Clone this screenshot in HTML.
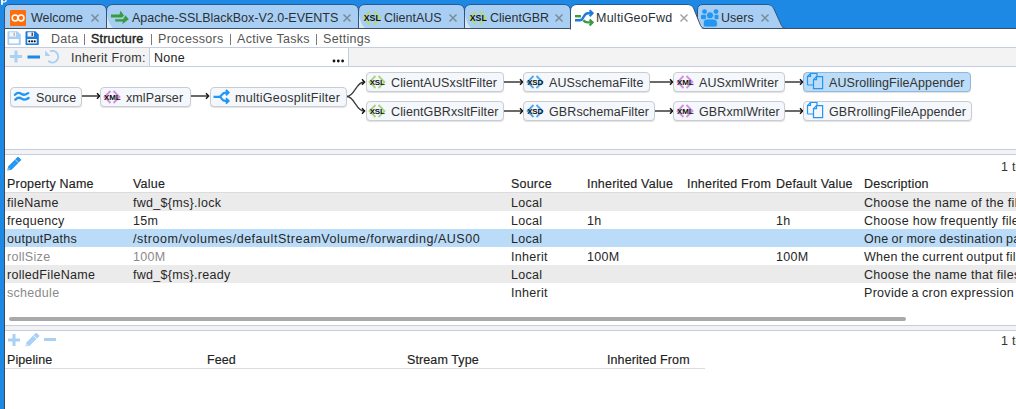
<!DOCTYPE html>
<html><head><meta charset="utf-8">
<style>
*{margin:0;padding:0;box-sizing:border-box}
html,body{width:1016px;height:409px;overflow:hidden;background:#fff}
body{position:relative;font-family:"Liberation Sans",sans-serif;color:#222}
.a{position:absolute;white-space:pre;line-height:1}
.t13{font-size:12.5px}
.node{position:absolute;height:20px;border:1px solid #c9cdd2;border-radius:4px;background:#f4f7fb;box-shadow:0 1px 1px rgba(0,0,0,.12)}
.node.sel{background:#bcdcf7;border-color:#8fb8dc}
.nt{position:absolute;top:4px;font-size:12.5px;line-height:1;color:#333;white-space:pre;letter-spacing:.1px}
.hdr{font-size:12.5px;color:#222;letter-spacing:.2px;-webkit-text-stroke:.15px #222}
.cell{font-size:12.5px;color:#262626;letter-spacing:.3px}
.grey{color:#8a8a8a}
.tb{top:33px;font-size:12.5px;color:#555;letter-spacing:.3px}
.row{position:absolute;left:5px;width:1011px;height:18px}
</style></head><body>

<!-- top bar & tabs -->
<svg class="a" style="left:0;top:0" width="1016" height="409" viewBox="0 0 1016 409">
  <rect x="0" y="0" width="1016" height="29" fill="#1e88e5"/>
  <rect x="0" y="0" width="4" height="409" fill="#1e88e5"/>
  <rect x="4" y="29" width="1" height="380" fill="#3b4656"/>
  <!-- white p descender -->
  <path d="M1,0 H2.9 V4.8 H1z M2.9,0 H6.9 Q6.8,2.5 4.4,2.5 H2.9 V1.2 H4.4 Q5.4,1.2 5.5,0z" fill="#fff"/>
  <defs><linearGradient id="tg" gradientUnits="userSpaceOnUse" x1="0" y1="4" x2="0" y2="28"><stop offset="0" stop-color="#1f5c98"/><stop offset="0.35" stop-color="#2d5378"/><stop offset="1" stop-color="#445266"/></linearGradient></defs>
  <!-- Users tab -->
  <path d="M697.5,28.5 V10 Q697.5,4.5 703,4.5 H768 Q772,4.5 773.5,8 L781.5,25.5 Q782.5,28.5 786,28.5" fill="#a8cff3" stroke="url(#tg)" stroke-width="1"/>
  <!-- unselected tabs -->
  <path d="M4.5,28.5 V10 Q4.5,4.5 10,4.5 H100 Q106.5,4.5 106.5,11 V28.5z" fill="#a8cff3" stroke="url(#tg)"/>
  <path d="M106.5,28.5 V11 Q106.5,4.5 113,4.5 H352 Q358.5,4.5 358.5,11 V28.5z" fill="#a8cff3" stroke="url(#tg)"/>
  <path d="M358.5,28.5 V11 Q358.5,4.5 365,4.5 H458 Q464.5,4.5 464.5,11 V28.5z" fill="#a8cff3" stroke="url(#tg)"/>
  <path d="M464.5,28.5 V11 Q464.5,4.5 471,4.5 H564 Q570.5,4.5 570.5,11 V28.5z" fill="#a8cff3" stroke="url(#tg)"/>
  <!-- whitish triangles -->
  <path d="M107,15 Q109,25 113,28 H107z" fill="#d4e8fa"/>
  <path d="M359,15 Q361,25 365,28 H359z" fill="#d4e8fa"/>
  <path d="M465,15 Q467,25 471,28 H465z" fill="#d4e8fa"/>
  <!-- bottom dark line -->
  <rect x="4" y="28" width="567" height="1" fill="#3f5064"/>
  <rect x="702" y="28" width="314" height="1" fill="#3f5064"/>
  <!-- selected tab -->
  <path d="M570.5,29.5 V11 Q570.5,4.5 577,4.5 H688 Q692,4.5 693.5,8 L700.5,25.5 Q701.5,28.5 705,28.5" fill="#fff" stroke="url(#tg)"/>
  <rect x="571" y="27" width="130" height="3" fill="#fff"/>
</svg>

<!-- tab icons -->
<svg class="a" style="left:10px;top:10px" width="16" height="16" viewBox="0 0 16 16">
  <rect width="16" height="16" rx="1" fill="#ff6d0a"/>
  <circle cx="5.1" cy="8" r="2.9" fill="none" stroke="#fff" stroke-width="1.5"/>
  <circle cx="11.1" cy="8" r="2.9" fill="none" stroke="#fff" stroke-width="1.5"/>
</svg>
<div class="a t13" style="left:31px;top:12px;color:#2a2f36">Welcome</div>


<svg class="a" style="left:110px;top:10px" width="20" height="16" viewBox="0 0 20 16">
  <path d="M1,4.4 H9.5 L10.5,0.7 L14,5.5 L12,7.6 H1z" fill="#3a9a3e"/>
  <path d="M5,9 H13 L15.4,5.1 L19,9.3 L12.2,14.6 L12.5,11.8 H5z" fill="#3a9a3e" stroke="#9fcde0" stroke-width="0.5"/>
</svg>
<div class="a t13" style="left:132px;top:12px;color:#2a2f36">Apache-SSLBlackBox-V2.0-EVENTS</div>


<svg class="a" style="left:363px;top:10px" width="18" height="16" viewBox="0 0 18 16">
  <path d="M7,1.5 L1,8 L7,14.5 M11,1.5 L17,8 L11,14.5" fill="none" stroke="#b5d879" stroke-width="2"/>
  <text x="9.3" y="11" text-anchor="middle" font-family="Liberation Sans" font-weight="bold" font-size="8.8" fill="#111" letter-spacing="0">XSL</text>
</svg>
<div class="a t13" style="left:384px;top:12px;color:#2a2f36">ClientAUS</div>


<svg class="a" style="left:469px;top:10px" width="18" height="16" viewBox="0 0 18 16">
  <path d="M7,1.5 L1,8 L7,14.5 M11,1.5 L17,8 L11,14.5" fill="none" stroke="#b5d879" stroke-width="2"/>
  <text x="9.3" y="11" text-anchor="middle" font-family="Liberation Sans" font-weight="bold" font-size="8.8" fill="#111" letter-spacing="0">XSL</text>
</svg>
<div class="a t13" style="left:490px;top:12px;color:#2a2f36">ClientGBR</div>


<svg class="a" style="left:574px;top:9px" width="20" height="18" viewBox="0 0 20 18">
  <g fill="none" stroke-width="2.4">
  <path d="M1,7.2 H7" stroke="#3a9a3e"/>
  <path d="M9.3,11.3 Q11,13.4 14,13.4 H18" stroke="#3a9a3e"/>
  <path d="M15.6,10.4 L18.6,13.4 L15.6,16.4" stroke="#3a9a3e" stroke-width="2.1"/>
  <path d="M1,11.2 H6 Q8,11.2 9.5,8 Q11.5,4.2 14,4.2 H18" stroke="#1e7ddb"/>
  <path d="M15.6,1.2 L18.6,4.2 L15.6,7.2" stroke="#1e7ddb" stroke-width="2.1"/>
  </g>
</svg>
<div class="a t13" style="left:596px;top:12px;color:#2a2f36;letter-spacing:.25px">MultiGeoFwd</div>


<svg class="a" style="left:700px;top:8px" width="20" height="20" viewBox="0 0 20 20">
  <g fill="#2196f3">
  <circle cx="4.5" cy="3.6" r="2.4"/><circle cx="16" cy="3.6" r="2.4"/>
  <rect x="1" y="6.8" width="5" height="4.4" rx="1"/><rect x="14.5" y="6.8" width="4" height="4.4" rx="1"/>
  <circle cx="10" cy="7.4" r="3.6" stroke="#a8cff3" stroke-width="0.8"/>
  <path d="M3.3,15 Q3.3,11 7.5,11 H12.5 Q17.4,11 17.4,15 V17 Q17.4,19 15,19 H5.5 Q3.3,19 3.3,17z" stroke="#a8cff3" stroke-width="0.8"/>
  </g>
</svg>
<div class="a t13" style="left:721px;top:12px;color:#2a2f36">Users</div>


<svg class="a" style="left:0;top:0" width="1016" height="30" viewBox="0 0 1016 30"><g stroke-width="1.5"><path d="M91.5,14.5 L98.5,21.5 M98.5,14.5 L91.5,21.5" stroke="#7d8b99"/><path d="M343.5,14.5 L350.5,21.5 M350.5,14.5 L343.5,21.5" stroke="#7d8b99"/><path d="M449.5,14.5 L456.5,21.5 M456.5,14.5 L449.5,21.5" stroke="#7d8b99"/><path d="M555.5,14.5 L562.5,21.5 M562.5,14.5 L555.5,21.5" stroke="#7d8b99"/><path d="M680.5,14.5 L687.5,21.5 M687.5,14.5 L680.5,21.5" stroke="#a0a4a8"/><path d="M761.5,14.5 L768.5,21.5 M768.5,14.5 L761.5,21.5" stroke="#7d8b99"/></g></svg>
<!-- toolbar row -->
<svg class="a" style="left:7px;top:31px" width="34" height="15" viewBox="0 0 34 15">
  <path d="M0.5,1 Q0.5,0.3 1.2,0.3 H10.5 L13.8,3.6 V13.3 Q13.8,14 13.1,14 H1.2 Q0.5,14 0.5,13.3z" fill="#a8cff3"/>
  <rect x="2.5" y="1.2" width="6.5" height="4.4" fill="#f4f6f8"/><rect x="6.5" y="1.6" width="1.5" height="3.4" fill="#b9b9b9"/>
  <rect x="2.2" y="8" width="9.5" height="4.4" fill="#fff"/>
  <path d="M18.5,1 Q18.5,0.3 19.2,0.3 H28.5 L31.8,3.6 V13.3 Q31.8,14 31.1,14 H19.2 Q18.5,14 18.5,13.3z" fill="#1e7ddb"/>
  <rect x="20.5" y="1.2" width="6.5" height="4.4" fill="#f4f6f8"/><rect x="24.5" y="1.6" width="1.5" height="3.4" fill="#555"/>
  <rect x="20.2" y="8" width="9.5" height="4.4" fill="#fff"/>
  <circle cx="22.3" cy="10.3" r="1.1" fill="#111"/><circle cx="25" cy="10.3" r="1.1" fill="#111"/><circle cx="27.7" cy="10.3" r="1.1" fill="#111"/>
</svg>
<div class="a tb" style="left:51px">Data</div><div class="a" style="left:84px;top:34px;width:1px;height:11px;background:#7a7a7a"></div><div class="a tb" style="left:91px;color:#222;letter-spacing:.2px;-webkit-text-stroke:.4px #222">Structure</div><div class="a" style="left:151px;top:34px;width:1px;height:11px;background:#7a7a7a"></div><div class="a tb" style="left:158px">Processors</div><div class="a" style="left:230px;top:34px;width:1px;height:11px;background:#7a7a7a"></div><div class="a tb" style="left:237px">Active Tasks</div><div class="a" style="left:316px;top:34px;width:1px;height:11px;background:#7a7a7a"></div><div class="a tb" style="left:323px">Settings</div>

<!-- inherit row -->
<div class="a" style="left:5px;top:47px;width:1011px;height:20px;background:#f3f3f3;border-top:1px solid #c5cde3;border-bottom:1px solid #c5cde3"></div>
<svg class="a" style="left:9px;top:50px" width="52" height="14" viewBox="0 0 52 14">
  <path d="M1,6.5 H13 M7,0.5 V12.5" stroke="#a8d1f5" stroke-width="3"/>
  <path d="M18.5,7 H31" stroke="#1e88e5" stroke-width="3"/>
  <path d="M40.95,1.44 A5.8,5.8 0 1 1 39.3,10.8" fill="none" stroke="#a8d1f5" stroke-width="2"/>
  <path d="M36.1,0.4 V5.9 H41.4z" fill="#a8d1f5"/>
</svg>
<div class="a" style="left:71px;top:52px;font-size:12.5px;color:#333;letter-spacing:.3px">Inherit From:</div>
<div class="a" style="left:149px;top:47px;width:200px;height:20px;background:#fff;border:1px solid #c5cde3"></div>
<div class="a" style="left:154px;top:52px;font-size:12.5px;color:#222;letter-spacing:.3px">None</div>
<svg class="a" style="left:332px;top:59px" width="14" height="4" viewBox="0 0 14 4"><circle cx="2" cy="2" r="1.4" fill="#111"/><circle cx="6.3" cy="2" r="1.4" fill="#111"/><circle cx="10.6" cy="2" r="1.4" fill="#111"/></svg>

<!-- pipeline diagram -->
<svg class="a" style="left:0;top:66px" width="1016" height="84" viewBox="0 66 1016 84">
  <g stroke="#3a3a3a" stroke-width="1.3" fill="none">
    <path d="M82,96 H99 M190,96 H208 M504,82 H522 M504,111 H522 M650,82 H672 M654.5,111 H672 M784.5,82 H802 M784.5,111 H802" />
    <path d="M347,96.5 C355,96 356,82 364,82"/>
    <path d="M347,96.5 C355,97 356,111 364,111"/>
  </g>
  <g stroke="#111" stroke-width="1.4" fill="none">
    <path d="M97,93.2 L99.6,96 L97,98.8 M206,93.2 L208.6,96 L206,98.8"/>
    <path d="M362,79.2 L364.6,82 L362,84.8 M362,108.2 L364.6,111 L362,113.8"/>
    <path d="M520,79.2 L522.6,82 L520,84.8 M520,108.2 L522.6,111 L520,113.8"/>
    <path d="M670,79.2 L672.6,82 L670,84.8 M670,108.2 L672.6,111 L670,113.8"/>
    <path d="M800,79.2 L802.6,82 L800,84.8 M800,108.2 L802.6,111 L800,113.8"/>
  </g>
</svg>

<div class="node" style="left:10px;top:87px;width:72px"></div>
<svg class="a" style="left:13px;top:91px" width="18" height="12" viewBox="0 0 18 12"><path d="M2,3.8 Q5,0.6 8.2,2.8 Q11.5,5 15.2,2.2 M2.4,8.6 Q5.4,5.4 8.6,7.6 Q11.9,9.8 15.6,7" fill="none" stroke="#2196f3" stroke-width="2.3" stroke-linecap="round"/></svg>
<div class="a nt" style="left:36px;top:92px">Source</div>

<div class="node" style="left:100px;top:87px;width:91px"></div>
<svg class="a" style="left:103px;top:90px" width="18" height="14" viewBox="0 0 18 14"><path d="M7.5,1 L1.5,7 L7.5,13 M10.5,1 L16.5,7 L10.5,13" fill="none" stroke="#d98be0" stroke-width="1.8"/><text x="9.2" y="9.7" text-anchor="middle" font-family="Liberation Sans" font-weight="bold" font-size="8" fill="#111" letter-spacing="-0.15">XML</text></svg>
<div class="a nt" style="left:126px;top:92px">xmlParser</div>

<div class="node" style="left:210px;top:87px;width:137px"></div>
<svg class="a" style="left:212px;top:89px" width="20" height="16" viewBox="0 0 20 16"><g fill="none" stroke="#2196f3" stroke-width="2.2"><path d="M1.5,7.8 H7 Q8.8,7.8 9.8,5.8 Q11.2,3.6 13.5,3.6 H16.2 M7,7.8 Q8.8,7.8 9.8,9.8 Q11.2,11.9 13.5,11.9 H16.2"/><path d="M13.9,0.9 L16.6,3.6 L13.9,6.3 M13.9,9.2 L16.6,11.9 L13.9,14.6" stroke-width="2"/></g></svg>
<div class="a nt" style="left:235px;top:92px;letter-spacing:.27px">multiGeosplitFilter</div>

<div class="node" style="left:366px;top:72px;width:138px"></div>
<div class="node" style="left:366px;top:101px;width:138px"></div>
<svg class="a" style="left:368px;top:75px" width="18" height="14" viewBox="0 0 18 14"><path d="M7.5,1 L1.5,7 L7.5,13 M10.5,1 L16.5,7 L10.5,13" fill="none" stroke="#a8d67c" stroke-width="1.8"/><text x="9.2" y="9.7" text-anchor="middle" font-family="Liberation Sans" font-weight="bold" font-size="8" fill="#111" letter-spacing="-0.15">XSL</text></svg>
<svg class="a" style="left:368px;top:104px" width="18" height="14" viewBox="0 0 18 14"><path d="M7.5,1 L1.5,7 L7.5,13 M10.5,1 L16.5,7 L10.5,13" fill="none" stroke="#a8d67c" stroke-width="1.8"/><text x="9.2" y="9.7" text-anchor="middle" font-family="Liberation Sans" font-weight="bold" font-size="8" fill="#111" letter-spacing="-0.15">XSL</text></svg>
<div class="a nt" style="left:391px;top:77px">ClientAUSxsltFilter</div>
<div class="a nt" style="left:391px;top:106px">ClientGBRxsltFilter</div>

<div class="node" style="left:523px;top:72px;width:127px"></div>
<div class="node" style="left:523px;top:101px;width:132px"></div>
<svg class="a" style="left:526px;top:75px" width="18" height="14" viewBox="0 0 18 14"><path d="M7.5,1 L1.5,7 L7.5,13 M10.5,1 L16.5,7 L10.5,13" fill="none" stroke="#4aa8f2" stroke-width="1.8"/><text x="9.2" y="9.7" text-anchor="middle" font-family="Liberation Sans" font-weight="bold" font-size="8" fill="#111" letter-spacing="-0.15">XSD</text></svg>
<svg class="a" style="left:526px;top:104px" width="18" height="14" viewBox="0 0 18 14"><path d="M7.5,1 L1.5,7 L7.5,13 M10.5,1 L16.5,7 L10.5,13" fill="none" stroke="#4aa8f2" stroke-width="1.8"/><text x="9.2" y="9.7" text-anchor="middle" font-family="Liberation Sans" font-weight="bold" font-size="8" fill="#111" letter-spacing="-0.15">XSD</text></svg>
<div class="a nt" style="left:549px;top:77px">AUSschemaFilte</div>
<div class="a nt" style="left:549px;top:106px">GBRschemaFilter</div>

<div class="node" style="left:673px;top:72px;width:112px"></div>
<div class="node" style="left:673px;top:101px;width:112px"></div>
<svg class="a" style="left:676px;top:75px" width="18" height="14" viewBox="0 0 18 14"><path d="M7.5,1 L1.5,7 L7.5,13 M10.5,1 L16.5,7 L10.5,13" fill="none" stroke="#d98be0" stroke-width="1.8"/><text x="9.2" y="9.7" text-anchor="middle" font-family="Liberation Sans" font-weight="bold" font-size="8" fill="#111" letter-spacing="-0.15">XML</text></svg>
<svg class="a" style="left:676px;top:104px" width="18" height="14" viewBox="0 0 18 14"><path d="M7.5,1 L1.5,7 L7.5,13 M10.5,1 L16.5,7 L10.5,13" fill="none" stroke="#d98be0" stroke-width="1.8"/><text x="9.2" y="9.7" text-anchor="middle" font-family="Liberation Sans" font-weight="bold" font-size="8" fill="#111" letter-spacing="-0.15">XML</text></svg>
<div class="a nt" style="left:699px;top:77px">AUSxmlWriter</div>
<div class="a nt" style="left:699px;top:106px">GBRxmlWriter</div>

<div class="node sel" style="left:803px;top:72px;width:168px"></div>
<div class="node" style="left:803px;top:101px;width:169px"></div>
<svg class="a" style="left:806px;top:72px" width="18" height="18" viewBox="0 0 18 18"><g fill="none" stroke="#2196f3" stroke-width="1.2"><path d="M1.5,13 V4.5 L4.5,1.5 H11 V4.5 M1.5,13 H7"/><path d="M7.5,16.6 V7.7 L10.5,4.7 H16.6 V16.6z"/><path d="M4.5,1.5 V4.5 H1.5 M10.5,4.7 V7.7 H7.5"/></g></svg>
<svg class="a" style="left:806px;top:101px" width="18" height="18" viewBox="0 0 18 18"><g fill="none" stroke="#2196f3" stroke-width="1.2"><path d="M1.5,13 V4.5 L4.5,1.5 H11 V4.5 M1.5,13 H7"/><path d="M7.5,16.6 V7.7 L10.5,4.7 H16.6 V16.6z"/><path d="M4.5,1.5 V4.5 H1.5 M10.5,4.7 V7.7 H7.5"/></g></svg>
<div class="a nt" style="left:829px;top:77px">AUSrollingFileAppender</div>
<div class="a nt" style="left:829px;top:106px">GBRrollingFileAppender</div>

<!-- splitter 1 -->
<div class="a" style="left:5px;top:149px;width:1011px;height:6px;background:#f2f2f2;border-top:1px solid #c5cde3;border-bottom:1px solid #c5cde3"></div>

<!-- properties toolbar -->
<svg class="a" style="left:7px;top:157px" width="15" height="15" viewBox="0 0 15 15"><g transform="translate(6.7,7.2) rotate(-45)"><path d="M-9,0 L-5.5,-2.4 H8 Q8.5,-2.4 8.5,-1.9 V1.9 Q8.5,2.4 8,2.4 H-5.5z" fill="#2196f3"/><path d="M4.4,-2.4 V2.4" stroke="#d6eafc" stroke-width=".8"/><path d="M-5,0 H3.5" stroke="#7fc0f7" stroke-width=".5" stroke-dasharray="1 1"/><path d="M-8,0 L-6,-1.2 V1.2z" fill="#8cc8f8"/></g></svg>
<div class="a" style="left:1001px;top:161px;font-size:12.5px;color:#333">1</div><div class="a" style="left:1012px;top:161px;font-size:12.5px;color:#333">to</div>

<!-- table header -->
<div class="a hdr" style="left:7px;top:178px">Property Name</div>
<div class="a hdr" style="left:133px;top:178px">Value</div>
<div class="a hdr" style="left:511px;top:178px">Source</div>
<div class="a hdr" style="left:587px;top:178px">Inherited Value</div>
<div class="a hdr" style="left:687px;top:178px">Inherited From</div>
<div class="a hdr" style="left:776px;top:178px">Default Value</div>
<div class="a hdr" style="left:864px;top:178px">Description</div>
<div class="a" style="left:5px;top:192px;width:1011px;height:1px;background:#dcdcdc"></div>

<div class="row" style="top:193px;background:#ebebeb"></div>
<div class="row" style="top:229px;background:#bbdcf8"></div>
<div class="row" style="top:265px;background:#ebebeb"></div>

<div class="a cell" style="left:7px;top:197px">fileName</div>
<div class="a cell" style="left:133px;top:197px">fwd_${ms}.lock</div>
<div class="a cell" style="left:511px;top:197px">Local</div>
<div class="a cell" style="left:864px;top:197px">Choose the name of the file</div>

<div class="a cell" style="left:7px;top:215px">frequency</div>
<div class="a cell" style="left:133px;top:215px">15m</div>
<div class="a cell" style="left:511px;top:215px">Local</div>
<div class="a cell" style="left:587px;top:215px">1h</div>
<div class="a cell" style="left:776px;top:215px">1h</div>
<div class="a cell" style="left:864px;top:215px">Choose how frequently files</div>

<div class="a cell" style="left:7px;top:233px">outputPaths</div>
<div class="a cell" style="left:133px;top:233px;letter-spacing:.53px">/stroom/volumes/defaultStreamVolume/forwarding/AUS00</div>
<div class="a cell" style="left:511px;top:233px">Local</div>
<div class="a cell" style="left:864px;top:233px;word-spacing:-.7px">One or more destination paths</div>

<div class="a cell grey" style="left:7px;top:251px">rollSize</div>
<div class="a cell grey" style="left:133px;top:251px">100M</div>
<div class="a cell" style="left:511px;top:251px">Inherit</div>
<div class="a cell" style="left:587px;top:251px">100M</div>
<div class="a cell" style="left:776px;top:251px">100M</div>
<div class="a cell" style="left:864px;top:251px;word-spacing:-.7px">When the current output file</div>

<div class="a cell" style="left:7px;top:269px">rolledFileName</div>
<div class="a cell" style="left:133px;top:269px">fwd_${ms}.ready</div>
<div class="a cell" style="left:511px;top:269px">Local</div>
<div class="a cell" style="left:864px;top:269px">Choose the name that files</div>

<div class="a cell grey" style="left:7px;top:287px">schedule</div>
<div class="a cell" style="left:511px;top:287px">Inherit</div>
<div class="a cell" style="left:864px;top:287px;word-spacing:-.7px">Provide a cron expression to</div>

<!-- scrollbar -->
<div class="a" style="left:9px;top:317px;width:897px;height:4px;border-radius:2px;background:#a9a9a9"></div>

<!-- splitter 2 -->
<div class="a" style="left:5px;top:325px;width:1011px;height:6px;background:#f2f2f2;border-top:1px solid #c5cde3;border-bottom:1px solid #c5cde3"></div>

<!-- bottom toolbar -->
<svg class="a" style="left:8px;top:333px" width="50" height="14" viewBox="0 0 50 14">
  <path d="M0,7 H12 M6,1 V13" stroke="#a8d1f5" stroke-width="3"/>
  <g transform="translate(23.9,7.2) rotate(-45)"><path d="M-9,0 L-5.5,-2.4 H8 Q8.5,-2.4 8.5,-1.9 V1.9 Q8.5,2.4 8,2.4 H-5.5z" fill="#a8d1f5"/><path d="M4.4,-2.4 V2.4" stroke="#fff" stroke-width=".8"/><path d="M-8,0 L-6,-1.2 V1.2z" fill="#dceefc"/></g>
  <path d="M36,6.5 H48" stroke="#a8d1f5" stroke-width="3"/>
</svg>
<div class="a" style="left:1001px;top:335px;font-size:12.5px;color:#333">1</div><div class="a" style="left:1012px;top:335px;font-size:12.5px;color:#333">to</div>

<div class="a hdr" style="left:7px;top:354px;font-size:12.5px;letter-spacing:.1px">Pipeline</div>
<div class="a hdr" style="left:207px;top:354px;font-size:12.5px;letter-spacing:.1px">Feed</div>
<div class="a hdr" style="left:407px;top:354px;font-size:12.5px;letter-spacing:.1px">Stream Type</div>
<div class="a hdr" style="left:607px;top:354px;font-size:12.5px;letter-spacing:.1px">Inherited From</div>
<div class="a" style="left:5px;top:368px;width:700px;height:1px;background:#dcdcdc"></div>

</body></html>
